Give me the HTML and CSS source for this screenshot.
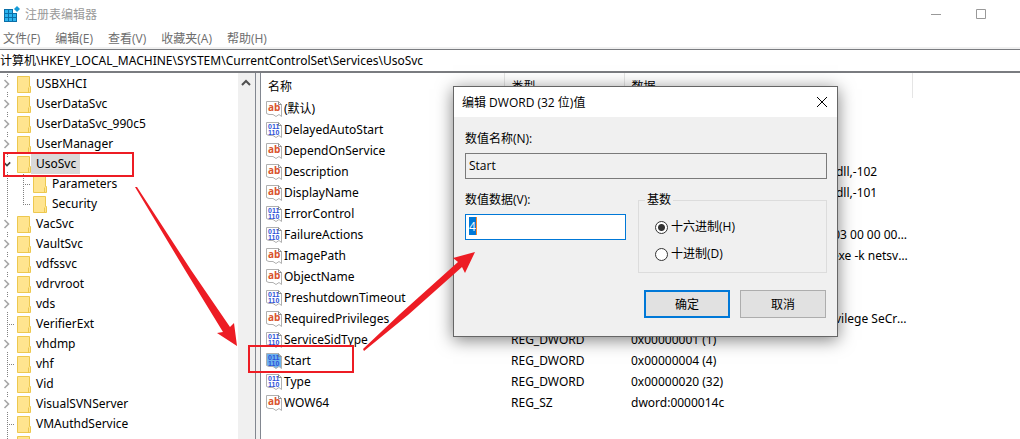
FILE: index.html
```
<!DOCTYPE html>
<html lang="zh-CN">
<head>
    <meta charset="UTF-8">
    <meta name="viewport" content="width=device-width, initial-scale=1.0">
    <title>注册表编辑器</title>
    <link rel="stylesheet" href="styles.css">
</head>
<body>
    <!-- Shared icons -->
    <svg class="sprites" aria-hidden="true">
        <symbol id="folder" viewBox="0 0 14 18">
            <path d="M.5 1.500H12.500V11.500H13.500V17.500H.5Z" fill="#ffe48f" stroke="#edc84f"/>
            <path d="M11.500 17V12.500" stroke="#edc84f"/>
        </symbol>
        <symbol id="chevron" viewBox="0 0 8 10">
            <path d="M1.500 1 5.500 5 1.500 9" fill="none" stroke="#a6a6a6" stroke-width="1.600"/>
        </symbol>
        <symbol id="string" viewBox="0 0 16 16">
            <path d="M.5.5H12.500L15.500 3.500V15.500L13 13.500 10 15.500 7 13.500 3 13.500.5 12.500Z" fill="#fff" stroke="#b0b0b0"/>
            <path d="M12.500.5V3.500H15.500" fill="none" stroke="#909090"/>
            <text x="2" y="10" class="glyph-ab">ab</text>
        </symbol>
        <symbol id="binary" viewBox="0 0 16 16">
            <path class="sheet" d="M.5.5H12.500L15.500 3.500V15.500L13 13.500 10 15.500 7 13.500 3 13.500.5 12.500Z" stroke="#b0b0b0"/>
            <path d="M12.500.5V3.500H15.500" fill="none" stroke="#909090"/>
            <text x="2" y="7" class="glyph-bits">011</text>
            <text x="2" y="13" class="glyph-bits">110</text>
        </symbol>
    </svg>

    <div class="window">
        <header class="title-bar">
            <svg class="app-icon" viewBox="0 0 16 16">
                <path d="M0 3H9V7H13V16H0Z" fill="#0a6fa8"/>
                <path d="M1 4H4V7H1ZM5 4H8V7H5ZM1 8H4V11H1ZM5 8H8V11H5ZM9 8H12V11H9ZM1 12H4V15H1ZM5 12H8V15H5ZM9 12H12V15H9Z" fill="#2cb4ee"/>
                <path d="M13 0 16 3 13 6 10 3Z" fill="#159bd7"/>
            </svg>
            <h1>注册表编辑器</h1>
            <div class="window-buttons">
                <button aria-label="最小化"><svg viewBox="0 0 10 10"><path d="M0 5.500H10"/></svg></button>
                <button aria-label="最大化"><svg viewBox="0 0 10 10"><path d="M.5.5H9.500V9.500H.5Z"/></svg></button>
            </div>
        </header>
        <nav class="menu-bar">
            <button>文件(F)</button>
            <button>编辑(E)</button>
            <button>查看(V)</button>
            <button>收藏夹(A)</button>
            <button>帮助(H)</button>
        </nav>
        <input class="address" type="text" aria-label="地址" value="计算机\HKEY_LOCAL_MACHINE\SYSTEM\CurrentControlSet\Services\UsoSvc">

        <div class="panes">
            <ul class="tree">
                <li class="branch"><svg class="arrow"><use href="#chevron"/></svg><svg class="folder"><use href="#folder"/></svg><span>USBXHCI</span></li>
                <li class="branch"><svg class="arrow"><use href="#chevron"/></svg><svg class="folder"><use href="#folder"/></svg><span>UserDataSvc</span></li>
                <li class="branch"><svg class="arrow"><use href="#chevron"/></svg><svg class="folder"><use href="#folder"/></svg><span>UserDataSvc_990c5</span></li>
                <li class="branch"><svg class="arrow"><use href="#chevron"/></svg><svg class="folder"><use href="#folder"/></svg><span>UserManager</span></li>
                <li class="branch selected"><svg class="arrow" viewBox="0 0 10 8"><path d="M1 2 5 6 9 2" fill="none" stroke="#404040" stroke-width="2"/></svg><svg class="folder"><use href="#folder"/></svg><span>UsoSvc</span></li>
                <li class="child"><svg class="folder"><use href="#folder"/></svg><span>Parameters</span></li>
                <li class="child last"><svg class="folder"><use href="#folder"/></svg><span>Security</span></li>
                <li class="branch"><svg class="arrow"><use href="#chevron"/></svg><svg class="folder"><use href="#folder"/></svg><span>VacSvc</span></li>
                <li class="branch"><svg class="arrow"><use href="#chevron"/></svg><svg class="folder"><use href="#folder"/></svg><span>VaultSvc</span></li>
                <li class="branch"><svg class="arrow"><use href="#chevron"/></svg><svg class="folder"><use href="#folder"/></svg><span>vdfssvc</span></li>
                <li class="branch"><svg class="arrow"><use href="#chevron"/></svg><svg class="folder"><use href="#folder"/></svg><span>vdrvroot</span></li>
                <li class="branch"><svg class="arrow"><use href="#chevron"/></svg><svg class="folder"><use href="#folder"/></svg><span>vds</span></li>
                <li class="leaf"><svg class="folder"><use href="#folder"/></svg><span>VerifierExt</span></li>
                <li class="branch"><svg class="arrow"><use href="#chevron"/></svg><svg class="folder"><use href="#folder"/></svg><span>vhdmp</span></li>
                <li class="leaf"><svg class="folder"><use href="#folder"/></svg><span>vhf</span></li>
                <li class="branch"><svg class="arrow"><use href="#chevron"/></svg><svg class="folder"><use href="#folder"/></svg><span>Vid</span></li>
                <li class="branch"><svg class="arrow"><use href="#chevron"/></svg><svg class="folder"><use href="#folder"/></svg><span>VisualSVNServer</span></li>
                <li class="leaf"><svg class="folder"><use href="#folder"/></svg><span>VMAuthdService</span></li>
                <li class="leaf"><svg class="folder"><use href="#folder"/></svg></li>
            </ul>
            <div class="scrollbar">
                <button aria-label="向上滚动"><svg viewBox="0 0 10 8"><path d="M1 6 5 2 9 6" fill="none" stroke="#505050" stroke-width="2"/></svg></button>
            </div>
            <div class="values">
                <table>
                    <colgroup>
                        <col class="col-name"><col class="col-type"><col class="col-data"><col>
                    </colgroup>
                    <thead>
                        <tr><th>名称</th><th>类型</th><th>数据</th><th></th></tr>
                    </thead>
                    <tbody>
                        <tr><td><svg><use href="#string"/></svg>(默认)</td><td>REG_SZ</td><td>(数值未设置)</td></tr>
                        <tr><td><svg><use href="#binary"/></svg>DelayedAutoStart</td><td>REG_DWORD</td><td>0x00000001 (1)</td></tr>
                        <tr><td><svg><use href="#string"/></svg>DependOnService</td><td>REG_MULTI_SZ</td><td>rpcss</td></tr>
                        <tr><td><svg><use href="#string"/></svg>Description</td><td>REG_SZ</td><td>@%systemroot%\system32\usocore.dll,-102</td></tr>
                        <tr><td><svg><use href="#string"/></svg>DisplayName</td><td>REG_SZ</td><td>@%systemroot%\system32\usocore.dll,-101</td></tr>
                        <tr><td><svg><use href="#binary"/></svg>ErrorControl</td><td>REG_DWORD</td><td>0x00000001 (1)</td></tr>
                        <tr><td><svg><use href="#binary"/></svg>FailureActions</td><td>REG_BINARY</td><td>80 51 01 00 00 00 00 00 00 00 00 00 03 00 00 00 14 00</td></tr>
                        <tr><td><svg><use href="#string"/></svg>ImagePath</td><td>REG_EXPAND_SZ</td><td>"%SystemRoot%\System32\svchost.exe -k netsvcs -p"</td></tr>
                        <tr><td><svg><use href="#string"/></svg>ObjectName</td><td>REG_SZ</td><td>LocalSystem</td></tr>
                        <tr><td><svg><use href="#binary"/></svg>PreshutdownTimeout</td><td>REG_DWORD</td><td>0x036ee800 (57600000)</td></tr>
                        <tr><td><svg><use href="#string"/></svg>RequiredPrivileges</td><td>REG_MULTI_SZ</td><td>SeDebugPrivilege SeImpersonatePrivilege SeCreateGlobalPrivilege</td></tr>
                        <tr><td><svg><use href="#binary"/></svg>ServiceSidType</td><td>REG_DWORD</td><td>0x00000001 (1)</td></tr>
                        <tr class="current"><td><svg><use href="#binary"/></svg>Start</td><td>REG_DWORD</td><td>0x00000004 (4)</td></tr>
                        <tr><td><svg><use href="#binary"/></svg>Type</td><td>REG_DWORD</td><td>0x00000020 (32)</td></tr>
                        <tr><td><svg><use href="#string"/></svg>WOW64</td><td>REG_SZ</td><td>dword:0000014c</td></tr>
                    </tbody>
                </table>
            </div>
        </div>
    </div>

    <form class="dialog">
        <div class="dialog-title">
            <h2>编辑 DWORD (32 位)值</h2>
            <button type="button" aria-label="关闭"><svg viewBox="0 0 12 12"><path d="M1 1 11 11M11 1 1 11" stroke="#000"/></svg></button>
        </div>
        <div class="dialog-body">
            <label for="value-name">数值名称(N):</label>
            <input id="value-name" class="field" type="text" value="Start" readonly>
            <div class="dialog-row">
                <div class="value-data">
                    <label for="value-data">数值数据(V):</label>
                    <div class="field active"><input id="value-data" type="text" value="4"></div>
                </div>
                <fieldset>
                    <legend>基数</legend>
                    <label><input type="radio" name="base" checked>十六进制(H)</label>
                    <label><input type="radio" name="base">十进制(D)</label>
                </fieldset>
            </div>
            <div class="dialog-buttons">
                <button type="button" class="default">确定</button>
                <button type="button">取消</button>
            </div>
        </div>
    </form>

    <!-- Red marks pointing out the steps -->
    <svg class="marks" width="480" height="380" aria-hidden="true">
        <path d="M4 153H133V176H4ZM249 346H353V372H249Z" fill="none" stroke="#ed1c24" stroke-width="2"/>
        <path d="M135 187 137 187 191 270 230 327 234 323 237 346 217 333 223 332 185 270Z" fill="#ed1c24"/>
        <path d="M363 349 400 314 458 262 453 258 475 252 465 273 462 267 408 315 364 351Z" fill="#ed1c24"/>
    </svg>
</body>
</html>
```
FILE: styles.css
```
* {
    box-sizing: border-box;
}
body {
    margin: 0;
    height: 100vh;
    overflow: hidden;
    position: relative;
    font-family: "Open Sans", "Noto Sans CJK SC", sans-serif;
    font-size: 12px;
    color: #000;
    background-color: #fff;
}
button, input {
    font: inherit;
    color: inherit;
}
button {
    padding: 0;
    border: none;
    background: none;
}
h1, h2 {
    margin: 0;
    font-size: 12px;
    font-weight: normal;
}
.sprites {
    position: absolute;
    width: 0;
    height: 0;
}
.glyph-ab {
    font: bold 10px "Open Sans", sans-serif;
    fill: #d9532c;
}
.glyph-bits {
    font: bold 7px "Liberation Sans", sans-serif;
    fill: #2b50d8;
}
.sheet {
    fill: var(--sheet, #fff);
}

/* Main window */
.window {
    display: flex;
    flex-direction: column;
    height: 100%;
}
.title-bar {
    display: flex;
    align-items: center;
    height: 28px;
    padding: 0 34px 0 4px;
    color: #999;
}
.app-icon {
    width: 16px;
    height: 16px;
    margin-right: 5px;
}
.window-buttons {
    display: flex;
    gap: 35px;
    margin-left: auto;
}
.window-buttons svg {
    display: block;
    width: 10px;
    height: 10px;
    fill: none;
    stroke: #999;
}
.menu-bar {
    display: flex;
    gap: 15px;
    height: 21px;
    padding: 0 3px;
    color: #6d6d6d;
    border-bottom: 2px solid #f0f0f0;
}
.address {
    height: 24px;
    padding: 0 0 2px;
    border: solid #7a7c80;
    border-width: 1px 0 2px;
    font-family: "Noto Sans", "Noto Sans CJK SC", sans-serif;
    outline: none;
}
.panes {
    display: flex;
    flex: 1;
    min-height: 0;
    font-family: "Noto Sans", "Noto Sans CJK SC", sans-serif;
}

/* Key tree */
.tree {
    flex: none;
    width: 238px;
    margin: 0;
    padding: 1px 0 0;
    list-style: none;
    overflow: hidden;
}
.tree li {
    --dots: repeating-linear-gradient(#808080 0 1px, transparent 1px 2px);
    --dash: repeating-linear-gradient(90deg, #808080 0 1px, transparent 1px 2px);
    display: flex;
    align-items: center;
    height: 20px;
    background-repeat: no-repeat;
}
.tree .branch {
    padding-left: 3px;
    background-image: var(--dots), var(--dots);
    background-size: 1px 3px;
    background-position: 7px 0, 7px 18px;
}
.tree .leaf {
    padding-left: 17px;
    background-image: var(--dots), var(--dash);
    background-size: 1px 20px, 7px 1px;
    background-position: 7px 0, 7px 10px;
}
.tree .child {
    padding-left: 33px;
    background-image: var(--dots), var(--dots), var(--dash);
    background-size: 1px 20px, 1px 20px, 7px 1px;
    background-position: 7px 0, 23px 0, 23px 10px;
}
.tree .child.last {
    background-size: 1px 20px, 1px 10px, 7px 1px;
}
.arrow {
    flex: none;
    width: 8px;
    height: 10px;
    margin-right: 6px;
}
.folder {
    flex: none;
    width: 14px;
    height: 18px;
}
.tree span {
    padding: 0 4px 0 5px;
    line-height: 20px;
}
.selected span {
    background-color: #d9d9d9;
}
.scrollbar {
    flex: none;
    width: 17px;
    padding: 6px 3px;
    background-color: #f0f0f0;
}
.scrollbar button {
    display: block;
}
.scrollbar svg {
    display: block;
    width: 10px;
    height: 8px;
}

/* Value list */
.values {
    flex: 1;
    min-width: 0;
    border-left: 1px solid #828790;
    box-shadow: inset 4px 0 #f0f0f0, inset 5px 0 #828790;
    padding-left: 5px;
    overflow: hidden;
}
table {
    width: 100%;
    table-layout: fixed;
    border-collapse: collapse;
    font-size: 12px;
}
.col-name {
    width: 243px;
}
.col-type {
    width: 120px;
}
.col-data {
    width: 288px;
}
th {
    height: 25px;
    padding: 0 4px 0 7px;
    font-weight: normal;
    text-align: left;
    border-right: 1px solid #e5e5e5;
}
th:last-child {
    border: none;
}
td {
    height: 21px;
    padding: 0 4px 0 7px;
    line-height: 20px;
    white-space: nowrap;
    overflow: hidden;
    text-overflow: ellipsis;
}
td:first-child {
    padding-left: 5px;
}
td svg {
    width: 16px;
    height: 16px;
    margin-right: 2px;
    vertical-align: middle;
}
.current svg {
    --sheet: #6db3ec;
}

/* Edit dialog */
.dialog {
    position: absolute;
    left: 453px;
    top: 86px;
    width: 385px;
    border: 1px solid #666;
    background-color: #f0f0f0;
    box-shadow: 0 3px 16px rgba(0, 0, 0, 0.5);
}
.dialog-title {
    display: flex;
    justify-content: space-between;
    align-items: center;
    height: 30px;
    padding: 0 9px 0 8px;
    background-color: #fff;
}
.dialog-title svg {
    display: block;
    width: 12px;
    height: 12px;
}
.dialog-body {
    padding: 13px 10px 18px 11px;
}
.dialog-body label {
    display: block;
    line-height: 18px;
}
.field {
    display: block;
    width: 100%;
    height: 26px;
    margin-top: 5px;
    padding: 0 3px 2px;
    border: 1px solid #7a7a7a;
    background-color: #f0f0f0;
    outline: none;
}
.active {
    padding: 2px 3px;
    border-color: #0078d7;
    background-color: #fff;
}
.active input {
    display: block;
    width: 8px;
    height: 18px;
    padding: 0;
    border: none;
    border-right: 1px solid #ff8728;
    background-color: #0078d7;
    color: #fff;
    outline: none;
}
.dialog-row {
    display: flex;
    gap: 12px;
    margin-top: 12px;
}
.value-data {
    width: 161px;
}
fieldset {
    flex: 1;
    min-width: 0;
    height: 82px;
    margin: 0;
    padding: 9px 16px;
    border: 1px solid #dcdcdc;
}
legend {
    padding: 0 2px;
    margin-left: -10px;
    line-height: 18px;
}
.dialog-body fieldset label {
    display: flex;
    align-items: center;
    margin-bottom: 9px;
}
input[type="radio"] {
    appearance: none;
    width: 13px;
    height: 13px;
    margin: 0 3px 0 0;
    border: 1px solid #333;
    border-radius: 50%;
    background-color: #fff;
}
input[type="radio"]:checked {
    background-image: radial-gradient(circle, #333 3px, transparent 4px);
}
.dialog-buttons {
    display: flex;
    justify-content: flex-end;
    gap: 10px;
    margin-top: 17px;
    padding-right: 1px;
}
.dialog-buttons button {
    width: 86px;
    height: 28px;
    border: 1px solid #adadad;
    background-color: #e1e1e1;
}
.dialog-buttons .default {
    border: 2px solid #0078d7;
}

.marks {
    position: absolute;
    left: 0;
    top: 0;
    pointer-events: none;
}
```
